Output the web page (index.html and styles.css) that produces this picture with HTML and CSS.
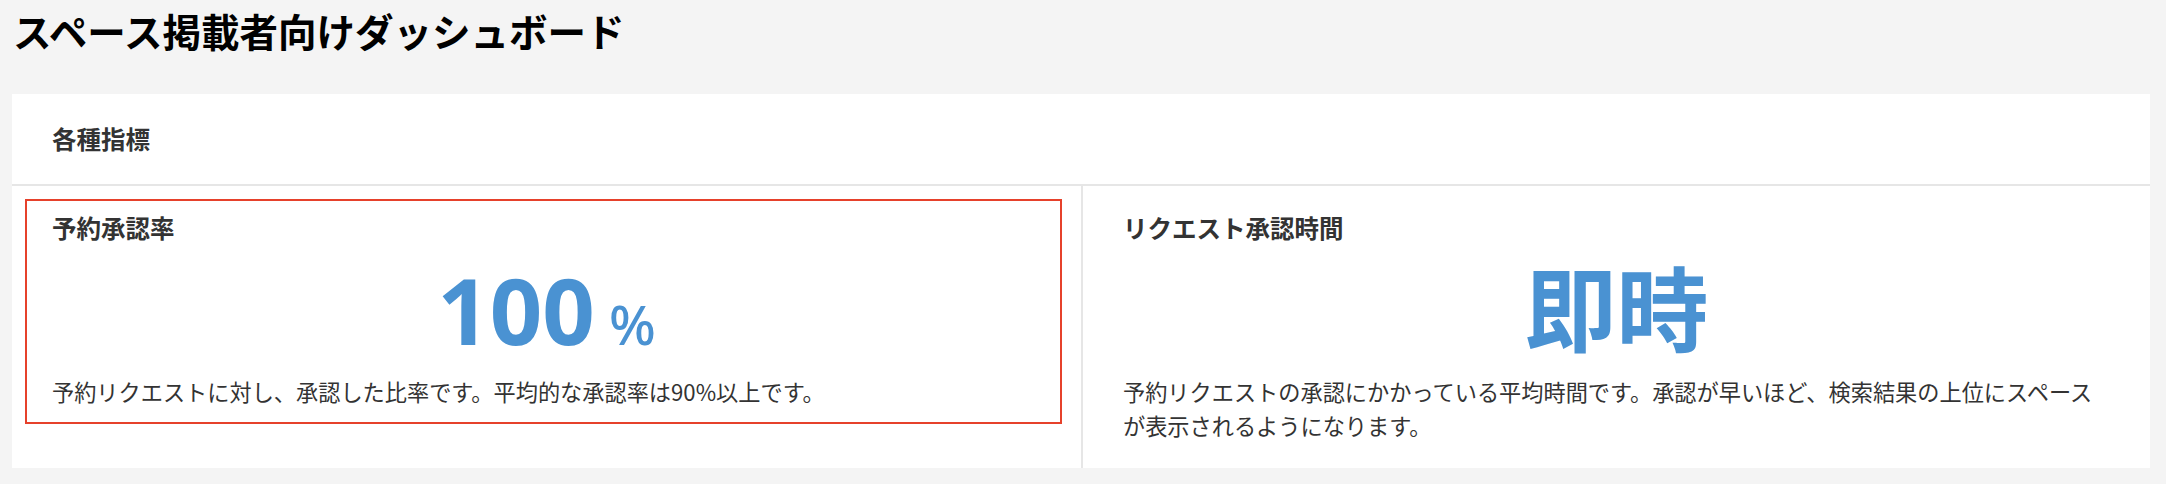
FILE: index.html
```html
<!DOCTYPE html>
<html lang="ja">
<head>
    <meta charset="UTF-8">
    <meta name="viewport" content="width=device-width, initial-scale=1.0">
    <title>スペース掲載者向けダッシュボード</title>
    <link rel="stylesheet" href="styles.css">
</head>
<body>
    <h1 class="page-title">スペース掲載者向けダッシュボード</h1>

    <div class="card">
        <div class="card-header">
            <h2>各種指標</h2>
        </div>
        <div class="metrics">
            <div class="metric highlighted">
                <h3 class="metric-title">予約承認率</h3>
                <div class="metric-value">100<span class="unit">%</span></div>
                <p class="metric-text">予約リクエストに対し、承認した比率です。平均的な承認率は90%以上です。</p>
            </div>
            <div class="metric">
                <h3 class="metric-title">リクエスト承認時間</h3>
                <div class="metric-value">即時</div>
                <p class="metric-text">予約リクエストの承認にかかっている平均時間です。承認が早いほど、検索結果の上位にスペースが表示されるようになります。</p>
            </div>
        </div>
    </div>
</body>
</html>
```

FILE: styles.css
```css
body {
    margin: 0;
    padding: 0 16px 16px 12px;
    background-color: #f4f4f4;
    font-family: "Noto Sans CJK JP", sans-serif;
    color: #333;
}
.page-title {
    margin: 0 0 40px;
    padding: 6px 0 0 1px;
    font-size: 38.5px;
    line-height: 48px;
    font-weight: bold;
    color: #000;
}
.card {
    background-color: #fff;
}
.card-header {
    padding: 27px 40px;
    border-bottom: 2px solid #e6e6e6;
}
.card-header h2 {
    margin: 0;
    font-size: 24.5px;
    line-height: 36px;
    font-weight: bold;
}
.metrics {
    display: grid;
    grid-template-columns: 1fr 1fr;
}
.metric {
    position: relative;
    padding: 24px 40px 26px;
}
.metric + .metric {
    border-left: 2px solid #e6e6e6;
}
.highlighted::after {
    content: "";
    position: absolute;
    top: 13px;
    left: 13px;
    right: 19px;
    bottom: 44px;
    border: 2px solid #e6412b;
}
.metric-title {
    margin: 0;
    font-size: 24.5px;
    line-height: 36px;
    font-weight: bold;
}
.metric-value {
    font-family: "Noto Sans", "Noto Sans CJK JP", sans-serif;
    font-size: 92px;
    line-height: 128px;
    font-weight: bold;
    color: #4a92d2;
    text-align: center;
}
.unit {
    margin-left: 14px;
    font-size: 55px;
    line-height: 1;
    font-weight: 500;
}
.metric-text {
    margin: 0;
    padding-right: 4px;
    font-size: 22.2px;
    line-height: 34px;
}
```
